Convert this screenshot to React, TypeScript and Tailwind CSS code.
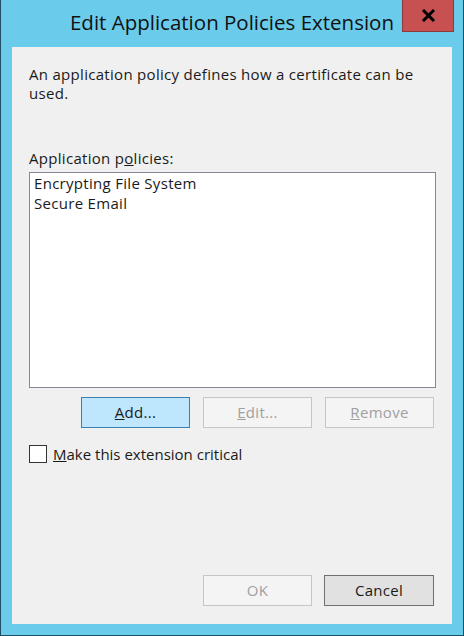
import React from "react";

const font = { fontFamily: '"Open Sans", "Noto Sans", sans-serif' };

function WinButton({
  children,
  variant = "normal",
  className = "",
}: {
  children: React.ReactNode;
  variant?: "normal" | "focused" | "disabled";
  className?: string;
}) {
  const styles =
    variant === "focused"
      ? "bg-[#bee6fd] border-[#3c7fb1] text-[#1a1a1a]"
      : variant === "disabled"
      ? "bg-[#f4f4f4] border-[#c6c6c6] text-[#a0a0a0]"
      : "bg-[#e1e1e1] border-[#8f8f8f] text-[#1a1a1a]";
  return (
    <button
      className={`w-[109px] h-[31px] border text-[15px] tracking-[0.3px] leading-none flex items-center justify-center ${styles} ${className}`}
    >
      {children}
    </button>
  );
}

export default function App() {
  return (
    <div
      className="w-[464px] h-[636px] bg-[#6bcbea] border-l border-r border-b border-[#1f4d66] flex flex-col"
      style={font}
    >
      {/* Title bar */}
      <div className="relative h-[47px] shrink-0 flex items-start justify-center">
        <h1 className="mt-[6px] text-[20.5px] text-[#111] leading-[32px]">
          Edit Application Policies Extension
        </h1>
        <button className="absolute top-0 right-[9px] w-[52px] h-[32px] bg-[#c75050] border border-t-0 border-[#8e3a3a] flex items-center justify-center">
          <svg width="15" height="13" viewBox="0 0 15 13">
            <path d="M2 1 L13 12 M13 1 L2 12" stroke="#000" strokeWidth="3" />
          </svg>
        </button>
      </div>

      {/* Client area */}
      <div className="mx-[11px] h-[577px] bg-[#f0f0f0] flex flex-col text-[15px] tracking-[0.3px] text-[#1a1a1a]">
        <p className="mt-[18px] ml-[17px] mr-[20px] leading-[19px]">
          An application policy defines how a certificate can be used.
        </p>

        <p className="mt-[45px] ml-[17px] leading-[20px]">
          Application p<span className="underline">o</span>licies:
        </p>

        <div className="mt-[4px] ml-[17px] w-[407px] h-[216px] bg-white border border-[#828790] px-[4px] leading-[20px]">
          <div>Encrypting File System</div>
          <div>Secure Email</div>
        </div>

        <div className="mt-[9px] ml-[69px] flex gap-[13px]">
          <WinButton variant="focused">
            <span>
              <span className="underline">A</span>dd...
            </span>
          </WinButton>
          <WinButton variant="disabled">
            <span>
              <span className="underline">E</span>dit...
            </span>
          </WinButton>
          <WinButton variant="disabled">
            <span>
              <span className="underline">R</span>emove
            </span>
          </WinButton>
        </div>

        <label className="mt-[16px] ml-[17px] flex items-center gap-[6px]">
          <span className="w-[18px] h-[18px] bg-white border border-[#333]" />
          <span className="leading-[20px] tracking-normal">
            <span className="underline">M</span>ake this extension critical
          </span>
        </label>

        <div className="mt-auto mb-[18px] ml-[191px] flex gap-[12px]">
          <WinButton variant="disabled">OK</WinButton>
          <WinButton className="w-[110px] border-[#707070]">Cancel</WinButton>
        </div>
      </div>
    </div>
  );
}
